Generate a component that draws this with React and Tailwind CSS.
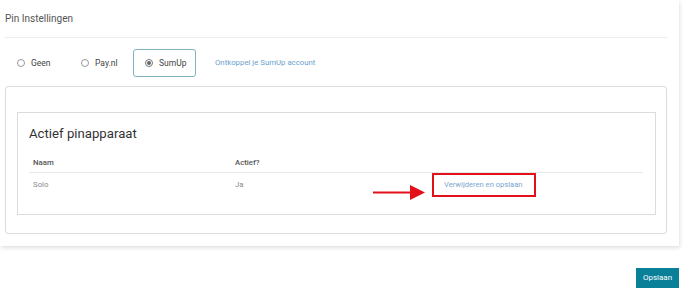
import React from "react";

function Radio({ label, checked, selected }) {
  return (
    <div
      className={
        "flex h-[28px] w-[63px] items-center rounded-[3px] border pl-[11px] " +
        (selected ? "border-[#7fb3c2]" : "border-transparent")
      }
    >
      <span
        className={
          "flex h-[8px] w-[8px] items-center justify-center rounded-full border " +
          (checked ? "border-[#777]" : "border-[#999]")
        }
      >
        {checked && <span className="h-[4px] w-[4px] rounded-full bg-[#666]" />}
      </span>
      <span className="ml-[6px] text-[8.5px] leading-none text-[#444]">{label}</span>
    </div>
  );
}

export default function App() {
  return (
    <div
      className="relative h-[296px] w-[688px] overflow-hidden bg-white"
      style={{ fontFamily: "Roboto, 'Liberation Sans', sans-serif" }}
    >
      <div className="w-[679px] bg-white pb-[12px] pl-[5px] pr-[12px] shadow-[1px_2px_4px_rgba(0,0,0,0.12)]">
        <div className="flex h-[38px] items-center border-b border-[#ececec] text-[10px] text-[#555]">
          Pin Instellingen
        </div>
        <div className="mt-[11px] flex h-[28px] items-center gap-[1px]">
          <Radio label="Geen" />
          <Radio label="Pay.nl" />
          <Radio label="SumUp" checked selected />
          <span className="ml-[18px] text-[7.8px] text-[#6a9fcc]">Ontkoppel je SumUp account</span>
        </div>
        <div className="mt-[9px] rounded-[3px] border border-[#dcdcdc] pb-[18px] pl-[11px] pr-[10px] pt-[25px]">
          <div className="border border-[#dcdcdc] pb-[18px] pl-[11px] pr-[12px] pt-[12px]">
            <div className="h-[17px] text-[13.2px] leading-[17px] text-[#333]">Actief pinapparaat</div>
            <div className="mt-[11px] grid h-[20px] grid-cols-[202px_209px_1fr] items-center border-b border-[#e8e8e8] text-[7.8px] font-medium text-[#555]">
              <span className="pl-[4px]">Naam</span>
              <span className="pl-[4px]">Actief?</span>
              <span />
            </div>
            <div className="grid h-[23px] grid-cols-[202px_209px_1fr] items-center text-[7.8px] text-[#8a8a8a]">
              <span className="pl-[4px]">Solo</span>
              <span className="pl-[4px]">Ja</span>
              <span className="relative pl-[4px] text-[7.6px] text-[#7aa6cf]">
                Verwijderen en opslaan
                <span className="absolute left-[-8px] top-[-6px] h-[24px] w-[104px] border-2 border-[#e3101a]" />
                <svg
                  className="absolute left-[-67px] top-[6px]"
                  width="52"
                  height="15"
                  viewBox="0 0 52 15"
                >
                  <rect x="0" y="6.5" width="40" height="2" fill="#e3101a" />
                  <polygon points="37,0 52,7.5 37,15" fill="#e3101a" />
                </svg>
              </span>
            </div>
          </div>
        </div>
      </div>
      <div className="mr-[9px] mt-[22px] flex justify-end">
        <div className="flex h-[20px] w-[43px] items-center justify-center bg-[#0a7f98] text-[8px] text-white">
          Opslaan
        </div>
      </div>
    </div>
  );
}
